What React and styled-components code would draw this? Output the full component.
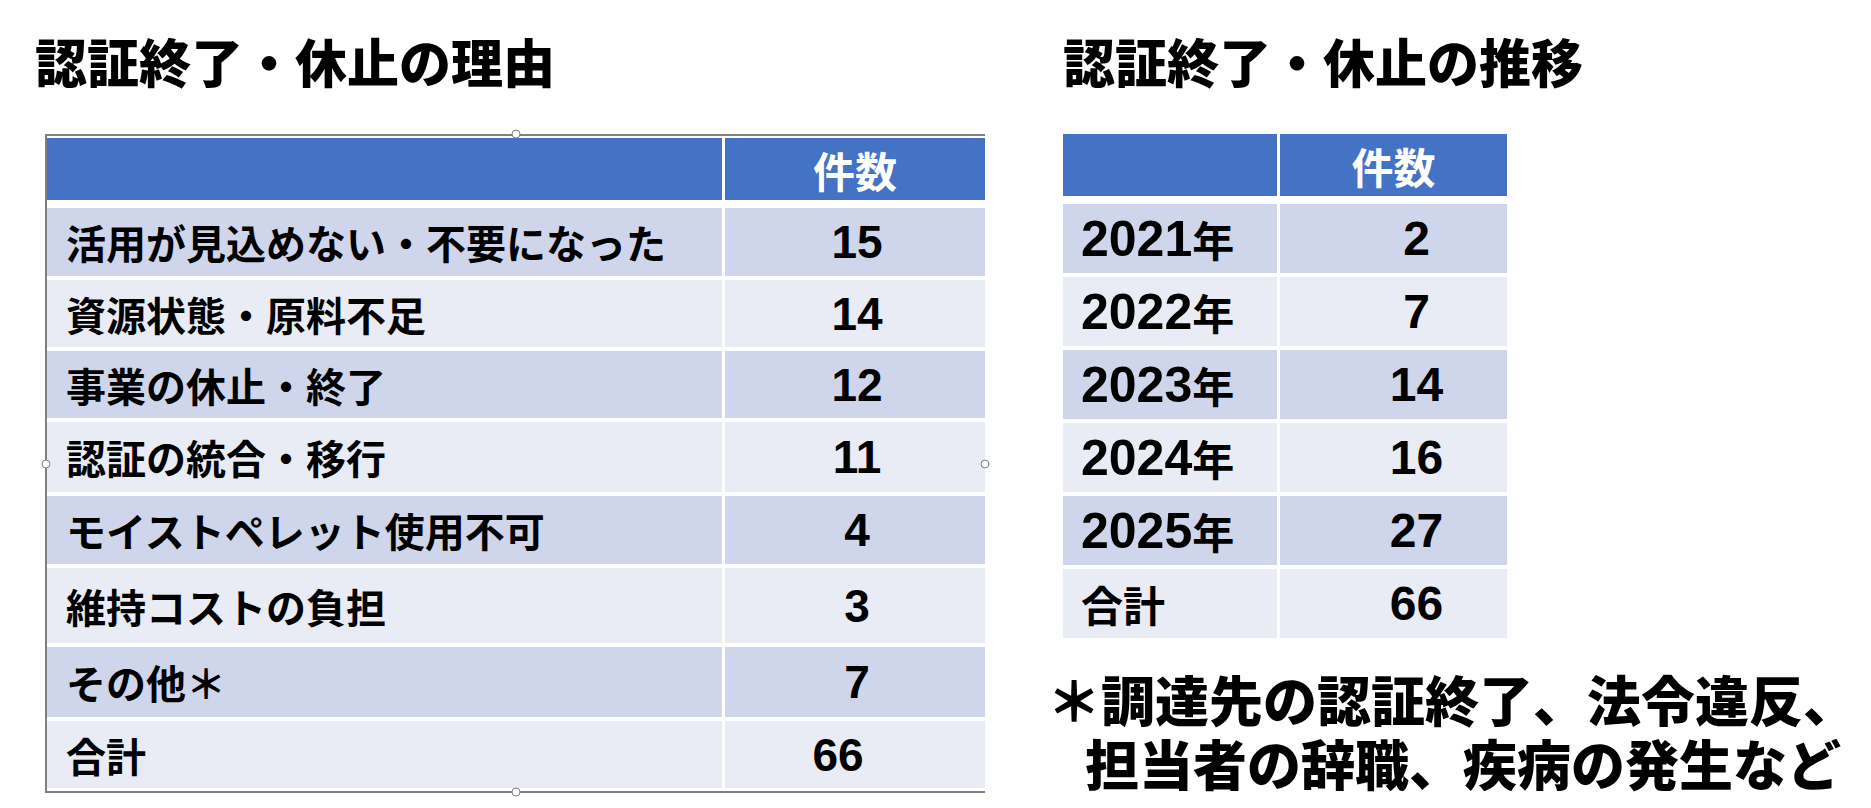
import React from 'react'
import styled, { createGlobalStyle } from 'styled-components'

const GlobalStyle = createGlobalStyle`
    body {
        margin: 0;
        background: #ffffff;
        font-family: "Noto Sans CJK JP", "Liberation Sans", sans-serif;
        color: #000000;
    }
`

const Page = styled.div`
    display: flex;
    align-items: flex-start;
    width: 1871px;
    height: 808px;
    overflow: hidden;
    padding-left: 35px;
    box-sizing: border-box;
`

const Column = styled.div`
    display: flex;
    flex-direction: column;
    margin-left: ${props => props.$offset || 0}px;
`

const Title = styled.h1`
    margin: 31px 0 0 0;
    font-size: 52px;
    line-height: 60px;
    font-weight: 900;
    white-space: nowrap;
`

const Frame = styled.div`
    position: relative;
    margin-top: 43px;
    margin-left: ${props => props.$indent || 0}px;
    border-top: ${props => props.$framed ? '2px solid #7f7f7f' : 'none'};
    border-bottom: ${props => props.$framed ? '2px solid #7f7f7f' : 'none'};
    border-left: ${props => props.$framed ? '2px solid #7f7f7f' : 'none'};
    padding: ${props => props.$framed ? '2px 0 3px 0' : '0'};
`

const Grid = styled.div`
    display: grid;
    grid-template-columns: ${props => props.$cols};
    grid-template-rows: ${props => props.$rows};
    column-gap: 3px;
    row-gap: 4px;
    background: #ffffff;
`

const HeadCell = styled.div`
    background: #4472c4;
    color: #ffffff;
    font-size: 42px;
    font-weight: 700;
    display: flex;
    align-items: center;
    justify-content: center;
    margin-bottom: 4px;
`

const LabelCell = styled.div`
    background: ${props => props.$dark ? '#cfd5ea' : '#e9ebf5'};
    display: flex;
    align-items: center;
    padding-left: ${props => props.$pad}px;
    font-size: ${props => props.$size}px;
    font-weight: 700;
    white-space: nowrap;
`

const ValueCell = styled.div`
    background: ${props => props.$dark ? '#cfd5ea' : '#e9ebf5'};
    display: flex;
    align-items: center;
    justify-content: center;
    padding-left: ${props => props.$padLeft || 0}px;
    padding-right: ${props => props.$padRight || 0}px;
    font-family: "Liberation Sans", "Noto Sans CJK JP", sans-serif;
    font-size: ${props => props.$size}px;
    font-weight: 700;
`

const Digits = styled.span`
    font-family: "Liberation Sans", sans-serif;
    font-size: 50px;
    font-weight: 700;
    line-height: 1;
`

const Handle = styled.span`
    position: absolute;
    width: 9px;
    height: 9px;
    border-radius: 50%;
    background: #ffffff;
    border: 1.5px solid #7f7f7f;
    box-sizing: border-box;
    transform: translate(-50%, -50%);
    left: ${props => props.$x};
    top: ${props => props.$y};
`

const Note = styled.div`
    margin-top: 29px;
    margin-left: -16px;
    font-size: 54px;
    line-height: 64px;
    font-weight: 900;
    white-space: nowrap;
`

const NoteLine = styled.div`
    padding-left: ${props => props.$indent || 0}px;
`

const reasons = [
    { label: '活用が見込めない・不要になった', value: '15', h: 68 },
    { label: '資源状態・原料不足', value: '14', h: 67 },
    { label: '事業の休止・終了', value: '12', h: 67 },
    { label: '認証の統合・移行', value: '11', h: 70 },
    { label: 'モイストペレット使用不可', value: '4', h: 68 },
    { label: '維持コストの負担', value: '3', h: 75 },
    { label: 'その他＊', value: '7', h: 70 },
    { label: '合計', value: '66', h: 67, shift: 34 },
]

const years = [
    { year: '2021', value: '2' },
    { year: '2022', value: '7' },
    { year: '2023', value: '14' },
    { year: '2024', value: '16' },
    { year: '2025', value: '27' },
    { year: null, value: '66' },
]

const handles = [
    ['50%', '-2px'],
    ['50%', 'calc(100% + 1px)'],
    ['-1px', '50%'],
    ['100%', '50%'],
]

const ReasonTable = () => (
    <Frame $framed $indent={10}>
        <Grid $cols="675px 260px" $rows={['66px', ...reasons.map(r => r.h + 'px')].join(' ')}>
            <HeadCell />
            <HeadCell>件数</HeadCell>
            {reasons.map((r, i) => (
                <React.Fragment key={r.label}>
                    <LabelCell $dark={i % 2 === 0} $pad={19} $size={40}>{r.label}</LabelCell>
                    <ValueCell $dark={i % 2 === 0} $size={46} $padLeft={r.shift ? 0 : 4} $padRight={r.shift || 0}>
                        {r.value}
                    </ValueCell>
                </React.Fragment>
            ))}
        </Grid>
        {handles.map(([x, y]) => <Handle key={x + y} $x={x} $y={y} />)}
    </Frame>
)

const YearTable = () => (
    <Frame>
        <Grid $cols="214px 227px" $rows="66px 69px 69px 69px 69px 69px 69px">
            <HeadCell />
            <HeadCell>件数</HeadCell>
            {years.map((y, i) => (
                <React.Fragment key={y.value + i}>
                    <LabelCell $dark={i % 2 === 0} $pad={18} $size={42}>
                        {y.year ? <><Digits>{y.year}</Digits>年</> : '合計'}
                    </LabelCell>
                    <ValueCell $dark={i % 2 === 0} $size={48} $padLeft={46}>{y.value}</ValueCell>
                </React.Fragment>
            ))}
        </Grid>
    </Frame>
)

const App = () => (
    <>
        <GlobalStyle />
        <Page>
            <Column>
                <Title>認証終了・休止の理由</Title>
                <ReasonTable />
            </Column>
            <Column $offset={78}>
                <Title>認証終了・休止の推移</Title>
                <YearTable />
                <Note>
                    <NoteLine>＊調達先の認証終了、法令違反、</NoteLine>
                    <NoteLine $indent={38}>担当者の辞職、疾病の発生など</NoteLine>
                </Note>
            </Column>
        </Page>
    </>
)

export default App
